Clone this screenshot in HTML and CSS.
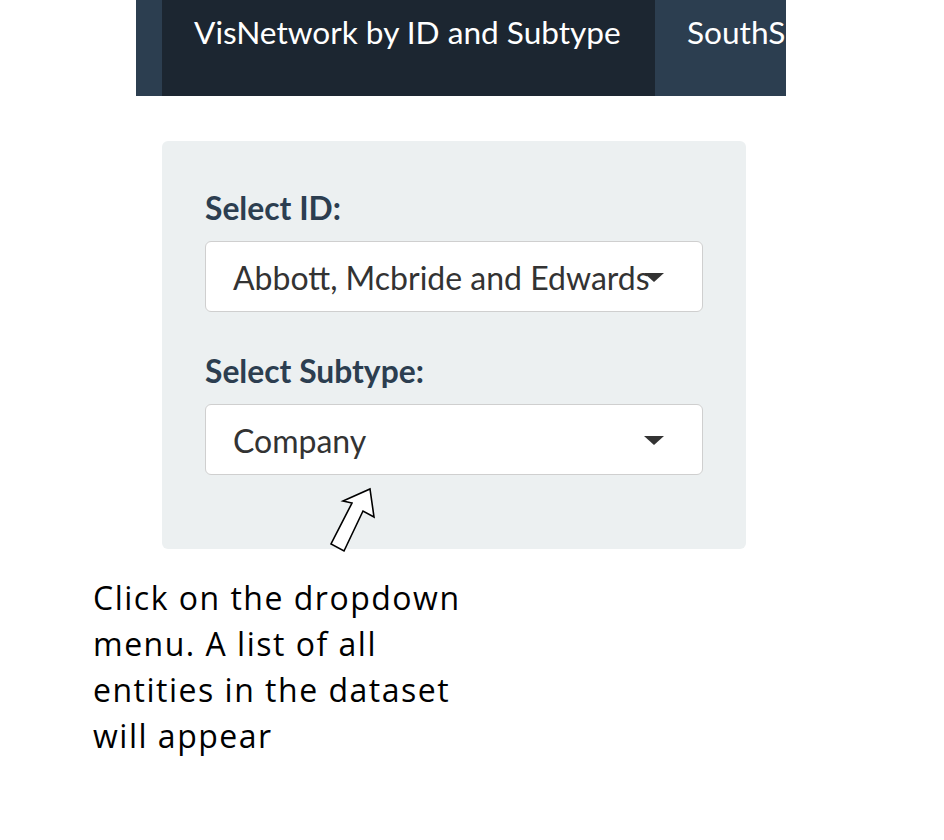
FILE: index.html
```html
<!DOCTYPE html>
<html lang="en">
<head>
<meta charset="utf-8">
<title>VisNetwork by ID and Subtype</title>
<link rel="stylesheet" href="styles.css">
</head>
<body>
  <nav class="navbar">
    <div class="nav-edge"></div>
    <div class="nav-tab active">VisNetwork by ID and Subtype</div>
    <div class="nav-tab">SouthS</div>
  </nav>

  <section class="panel">
    <div class="field">
      <label class="field-label">Select ID:</label>
      <div class="select">
        <span class="select-value">Abbott, Mcbride and Edwards</span>
        <span class="caret"></span>
      </div>
    </div>
    <div class="field">
      <label class="field-label">Select Subtype:</label>
      <div class="select">
        <span class="select-value">Company</span>
        <span class="caret"></span>
      </div>
    </div>
  </section>

  <svg class="pointer" width="60" height="80" viewBox="320 480 60 80" aria-hidden="true">
    <polygon points="370,489 374,517 363,511 344,551 331,544 352,503 343,501" fill="#fff" stroke="#000" stroke-width="1.6" stroke-linejoin="miter"/>
  </svg>

  <p class="note">Click on the dropdown<br>menu. A list of all<br>entities in the dataset<br>will appear</p>
</body>
</html>
```

FILE: styles.css
```css
* { box-sizing: border-box; }

html, body {
  margin: 0;
  padding: 0;
  background: #ffffff;
}

body {
  position: relative;
  width: 944px;
  height: 840px;
  font-family: Lato, "Open Sans", sans-serif;
}

.navbar {
  display: flex;
  margin-left: 136px;
  width: 650px;
  height: 96px;
  background: #2c3e50;
  overflow: hidden;
}

.nav-edge {
  flex: 0 0 26px;
  background: #2c3e50;
}

.nav-tab {
  flex: 0 0 auto;
  min-width: 0;
  padding: 12px 0 0 32px;
  font-size: 31.6px;
  line-height: 40px;
  color: #ffffff;
  white-space: nowrap;
  background: #2c3e50;
  overflow: hidden;
}

.nav-tab.active {
  flex: 0 0 493px;
  background: #1c2631;
}

.panel {
  margin: 45px 0 0 162px;
  width: 584px;
  height: 408px;
  padding: 49px 43px 0 43px;
  background: #ecf0f1;
  border-radius: 6px;
  display: flex;
  flex-direction: column;
  gap: 41px;
}

.field {
  display: flex;
  flex-direction: column;
  gap: 15px;
}

.field-label {
  font-weight: 700;
  font-size: 31.8px;
  line-height: 36px;
  color: #2c3e50;
}

.select {
  position: relative;
  flex: 0 0 71px;
  height: 71px;
  border: 1.5px solid #cfcfcf;
  border-radius: 6px;
  background: #ffffff;
  padding: 0 0 0 27px;
  display: flex;
  align-items: center;
}

.select-value {
  font-size: 32px;
  color: #333333;
  white-space: nowrap;
  padding-top: 1px;
}

.caret {
  position: absolute;
  right: 38px;
  top: 31px;
  width: 0;
  height: 0;
  border-left: 10px solid transparent;
  border-right: 10px solid transparent;
  border-top: 9px solid #333333;
}

.pointer {
  position: absolute;
  left: 320px;
  top: 480px;
}

.note {
  margin: 26px 0 0 93px;
  font-family: "Open Sans", sans-serif;
  font-size: 32px;
  letter-spacing: 1.5px;
  line-height: 46px;
  color: #000000;
}
```
